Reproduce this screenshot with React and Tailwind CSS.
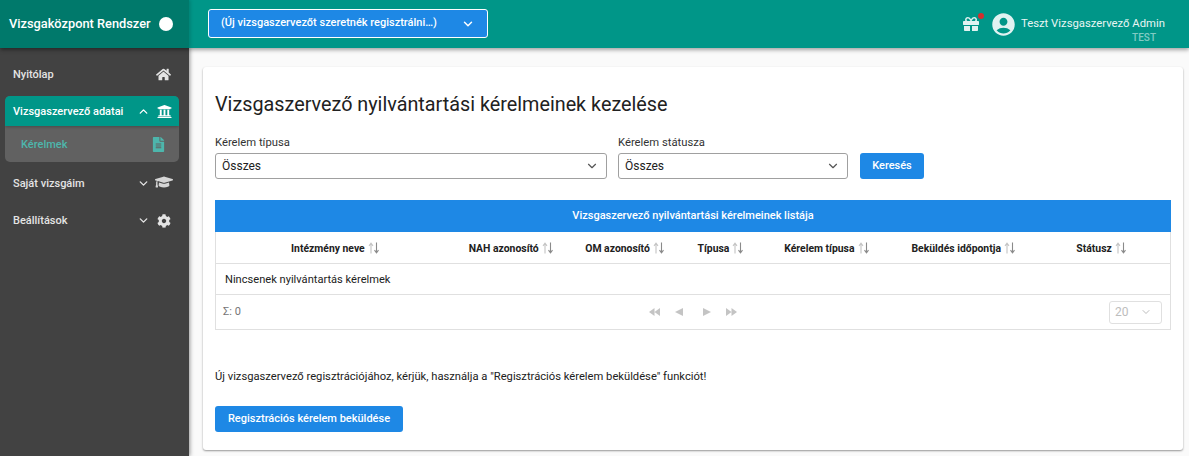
import React from "react";
import { FaHome, FaUniversity, FaFileAlt, FaGraduationCap, FaCog, FaGift } from "react-icons/fa";
import { MdAccountCircle } from "react-icons/md";
import { ChevronDown, ChevronUp } from "lucide-react";

function SortIcon() {
  return (
    <svg width="12" height="12" viewBox="0 0 12 12" className="ml-[3px] shrink-0" fill="none" strokeWidth="1.1">
      <path d="M3 11.5V1.5M1 3.8L3 1.2L5 3.8" stroke="#c4c4c4" />
      <path d="M8.5 0.5V10.5M6.5 8.2L8.5 10.8L10.5 8.2" stroke="#8a8a8a" />
    </svg>
  );
}

function Th({ w, children }) {
  return (
    <div style={{ width: w }} className="flex items-center justify-center pl-px text-[10.4px] font-bold text-[#212121]">
      <span className="pt-[2px]">{children}</span>
      <SortIcon />
    </div>
  );
}

function Pager({ w, d }) {
  return (
    <svg width={w} height="8" viewBox={`0 0 ${w} 8`} fill="#c4c4c4">
      <path d={d} />
    </svg>
  );
}

function MenuRow({ label, icon }) {
  return (
    <div className="flex items-center h-[37px] pl-[13px] pr-4 text-[11px] font-medium text-[#e4e4e4]">
      <span className="flex-1 pt-[2px]">{label}</span>
      <ChevronDown size={13} strokeWidth={2.5} className="mr-[5px]" />
      <span className="w-[18px] flex justify-center">{icon}</span>
    </div>
  );
}

export default function App() {
  return (
    <div className="h-[456px] w-[1189px] overflow-hidden flex flex-col bg-[#fafafa] font-['Roboto',sans-serif] text-[#212121]">
      <header className="relative z-20 h-12 shrink-0 flex items-center bg-[#009688] shadow-[0_2px_4px_rgba(0,0,0,0.35)]">
        <div className="w-[189px] h-full shrink-0 flex items-center pl-[9px] bg-[#00796b] text-white text-[12.8px] font-medium shadow-[2px_0_3px_rgba(0,0,0,0.12)]">
          <span>Vizsgaközpont Rendszer</span>
          <span className="ml-[8px] w-[14px] h-[14px] rounded-full bg-white" />
        </div>
        <div className="ml-[19px] mb-[1px] w-[280px] h-[29px] flex items-center justify-between pl-3 pr-3 rounded-[3px] border border-white bg-[#1e88e5] text-white text-[11px] font-medium">
          <span>(Új vizsgaszervezőt szeretnék regisztrálni…)</span>
          <ChevronDown size={14} strokeWidth={2.5} />
        </div>
        <div className="flex-1" />
        <div className="relative mr-[13px] text-[#e0f2f1]">
          <FaGift size={16} />
          <span className="absolute -top-[3px] -right-[5px] w-[6px] h-[6px] rounded-full bg-[#d32f2f]" />
        </div>
        <MdAccountCircle size={27} className="text-[#e0f2f1] -ml-[2px]" />
        <div className="relative ml-[4px] mr-[24px] text-[11.3px] text-[#e8f5f3]">
          Teszt Vizsgaszervező Admin
          <span className="absolute right-[9px] top-[14px] text-[10px] text-[#80cbc4] font-medium">TEST</span>
        </div>
      </header>

      <div className="flex flex-1 min-h-0">
        <aside className="w-[189px] shrink-0 bg-[#424242] pt-[8px] pr-[10px] shadow-[1px_0_4px_rgba(0,0,0,0.4)] z-10">
          <div className="flex items-center h-9 pl-[13px] pr-[6px] text-[11px] font-medium text-[#e4e4e4]">
            <span className="flex-1 pt-[2px]">Nyitólap</span>
            <span className="w-[18px] flex justify-center"><FaHome size={15} className="-ml-px" /></span>
          </div>
          <div className="ml-[5px] mt-[4px] rounded-[5px] overflow-hidden bg-[#616161]">
            <div className="relative flex items-center h-[30px] pl-2 pr-[6px] bg-[#009688] text-white text-[11px] font-medium shadow-[0_1px_3px_rgba(0,0,0,0.25)]">
              <span className="flex-1 pt-[2px]">Vizsgaszervező adatai</span>
              <ChevronUp size={13} strokeWidth={2.5} className="mr-[5px]" />
              <span className="w-[18px] flex justify-center"><FaUniversity size={15} /></span>
            </div>
            <div className="flex items-center h-9 pl-4 pr-[13px] text-[#4db6ac] text-[11px] font-medium">
              <span className="flex-1 pt-[2px]">Kérelmek</span>
              <FaFileAlt size={15} />
            </div>
          </div>
          <div className="mt-[3px] -mr-[10px]">
            <MenuRow label="Saját vizsgáim" icon={<FaGraduationCap size={18} className="-mt-[4px] text-[#d6d6d6]" />} />
            <MenuRow label="Beállítások" icon={<FaCog size={14} />} />
          </div>
        </aside>

        <main className="flex-1 pt-[19px] pl-[14px] pr-[6px] pb-[6px] min-w-0">
          <section className="h-full rounded-[3px] bg-white px-3 shadow-[0_1px_2px_rgba(0,0,0,0.4)]">
            <h1 className="pt-[25px] text-[19.8px] leading-[26px] font-normal text-[#212121]">
              Vizsgaszervező nyilvántartási kérelmeinek kezelése
            </h1>
            <div className="mt-[18px] flex items-end">
              <label className="w-[392px] block">
                <span className="block text-[11.25px] leading-[14px] mb-[3px] text-[#333]">Kérelem típusa</span>
                <div className="h-[26px] flex items-center justify-between px-[6px] rounded-[3px] border border-[#a0a0a0] text-[12px]">
                  <span>Összes</span>
                  <ChevronDown size={14} className="mr-[1px] text-[#555]" />
                </div>
              </label>
              <label className="w-[230px] block ml-[11px]">
                <span className="block text-[11.25px] leading-[14px] mb-[3px] text-[#333]">Kérelem státusza</span>
                <div className="h-[26px] flex items-center justify-between px-[6px] rounded-[3px] border border-[#a0a0a0] text-[12px]">
                  <span>Összes</span>
                  <ChevronDown size={14} className="mr-[1px] text-[#555]" />
                </div>
              </label>
              <button className="ml-[12px] w-16 h-[26px] rounded-[3px] bg-[#1e88e5] text-white text-[11px] font-medium">Keresés</button>
            </div>

            <div className="mt-[21px] border-x border-b border-[#e0e0e0]">
              <div className="-mx-px h-8 flex items-center justify-center bg-[#1e88e5] text-white text-[11px] font-medium">
                Vizsgaszervező nyilvántartási kérelmeinek listája
              </div>
              <div className="flex h-8 -ml-px border-b border-[#e0e0e0]">
                <Th w={240}>Intézmény neve</Th>
                <Th w={112}>NAH azonosító</Th>
                <Th w={116}>OM azonosító</Th>
                <Th w={76}>Típusa</Th>
                <Th w={136}>Kérelem típusa</Th>
                <Th w={138}>Beküldés időpontja</Th>
                <Th w={138}>Státusz</Th>
              </div>
              <div className="h-[31px] flex items-center px-[9px] border-b border-[#e0e0e0] text-[11.1px]">
                <span className="pt-[2px]">Nincsenek nyilvántartás kérelmek</span>
              </div>
              <div className="h-[34px] grid grid-cols-[1fr_auto_1fr] items-center pl-[7px] pr-[8px]">
                <span className="text-[11px] text-[#757575]">Σ: 0</span>
                <div className="flex items-center">
                  <Pager w={11} d="M5.5 0V8L0 4ZM11 0V8L5.5 4Z" />
                  <span className="w-[15px]" />
                  <Pager w={8} d="M8 0V8L0 4Z" />
                  <span className="w-5" />
                  <Pager w={8} d="M0 0V8L8 4Z" />
                  <span className="w-[15px]" />
                  <Pager w={11} d="M0 0V8L5.5 4ZM5.5 0V8L11 4Z" />
                </div>
                <div className="justify-self-end w-[53px] h-[23px] flex items-center justify-between pl-[5px] pr-[9px] rounded-[3px] border border-[#e0e0e0] text-[12px] text-[#bdbdbd]">
                  <span>20</span>
                  <ChevronDown size={12} />
                </div>
              </div>
            </div>

            <p className="mt-[40px] text-[11.2px] leading-[14px] text-[#212121]">
              Új vizsgaszervező regisztrációjához, kérjük, használja a "Regisztrációs kérelem beküldése" funkciót!
            </p>
            <button className="mt-[22px] w-[188px] h-[26px] rounded-[3px] bg-[#1e88e5] text-white text-[11px] font-medium">
              Regisztrációs kérelem beküldése
            </button>
          </section>
        </main>
      </div>
    </div>
  );
}
